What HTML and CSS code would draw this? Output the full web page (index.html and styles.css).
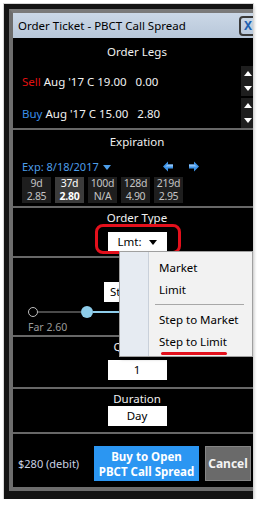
FILE: index.html
```html
<!DOCTYPE html>
<html lang="en">

<head>
    <meta charset="UTF-8">
    <meta name="viewport" content="width=device-width, initial-scale=1.0">
    <title>Order Ticket</title>
    <link rel="stylesheet" href="styles.css">
</head>

<body>

    <div class="shot">
        <div class="window">

            <div class="titlebar">
                <span class="title">Order Ticket - PBCT Call Spread</span>
                <span class="close">X</span>
            </div>

            <div class="content">

                <div class="section legs">
                    <h2>Order Legs</h2>
                    <div class="leg">
                        <span class="leg-text"><span class="sell">Sell</span> Aug '17 C 19.00 &nbsp; 0.00</span>
                        <span class="spinner"><i class="up"></i><i class="down"></i></span>
                    </div>
                    <div class="leg">
                        <span class="leg-text"><span class="buy">Buy</span> Aug '17 C 15.00 &nbsp; 2.80</span>
                        <span class="spinner"><i class="up"></i><i class="down"></i></span>
                    </div>
                </div>

                <div class="section expiration">
                    <h2>Expiration</h2>
                    <div class="exp-row">
                        <span class="exp-date">Exp: 8/18/2017 <i class="caret"></i></span>
                        <span class="nav-arrows">
                            <svg width="10" height="11" viewBox="0 0 10 11">
                                <path d="M0 5.5 L5 0.5 L5 3.5 L10 3.5 L10 7.5 L5 7.5 L5 10.5 Z" fill="#3d93e8" />
                                <path d="M5 3.5 L10 3.5 L10 5.5 L2 5.5 Z" fill="#8fc3f5" />
                            </svg>
                            <svg width="10" height="11" viewBox="0 0 10 11">
                                <path d="M10 5.5 L5 0.5 L5 3.5 L0 3.5 L0 7.5 L5 7.5 L5 10.5 Z" fill="#3d93e8" />
                                <path d="M5 3.5 L0 3.5 L0 5.5 L8 5.5 Z" fill="#8fc3f5" />
                            </svg>
                        </span>
                    </div>
                    <div class="chips">
                        <div class="chip"><span>9d</span><span>2.85</span></div>
                        <div class="chip selected"><span>37d</span><span>2.80</span></div>
                        <div class="chip"><span>100d</span><span>N/A</span></div>
                        <div class="chip"><span>128d</span><span>4.90</span></div>
                        <div class="chip"><span>219d</span><span>2.95</span></div>
                    </div>
                </div>

                <div class="section order-type">
                    <h2>Order Type</h2>
                    <div class="box">Lmt: <i class="caret dark"></i></div>
                </div>

                <div class="section price">
                    <h2>&nbsp;</h2>
                    <div class="box wide">Standard</div>
                    <div class="slider">
                        <span class="knob empty"></span>
                        <span class="track"></span>
                        <span class="knob filled"></span>
                        <span class="track active"></span>
                    </div>
                    <div class="slider-label">Far 2.60</div>
                </div>

                <div class="section quantity">
                    <h2>Quantity</h2>
                    <div class="box">1</div>
                </div>

                <div class="section duration">
                    <h2>Duration</h2>
                    <div class="box">Day</div>
                </div>

                <div class="footer">
                    <span class="cost">$280 (debit)</span>
                    <button class="btn-buy">Buy to Open<br>PBCT Call Spread</button>
                    <button class="btn-cancel">Cancel</button>
                </div>

            </div>

            <!-- annotation + open dropdown, over the ticket -->
            <div class="highlight"></div>

            <div class="menu">
                <div class="menu-item">Market</div>
                <div class="menu-item">Limit</div>
                <div class="menu-sep"></div>
                <div class="menu-item">Step to Market</div>
                <div class="menu-item">Step to Limit</div>
                <div class="underline"></div>
            </div>

        </div>
    </div>

</body>

</html>
```

FILE: styles.css
```css
html,
body {
    margin: 0;
    padding: 0;
    background: #fff;
    font-family: "Noto Sans", "Open Sans", sans-serif;
}

.shot {
    box-sizing: border-box;
    width: 249px;
    height: 495px;
    margin: 4px 0 0 4px;
    padding: 5px 0 0 5px;
    background: #141414;
    overflow: hidden;
    box-shadow: 0 0 0 1px #d8d8d8, 1px 2px 3px rgba(0, 0, 0, 0.25);
}

.window {
    position: relative;
    width: 248px;
    border: 4px solid #6d6d6d;
    border-right: none;
    border-top-color: #7a7a7a;
}

.titlebar {
    display: flex;
    align-items: center;
    justify-content: space-between;
    height: 25px;
    padding: 0 4px 0 5px;
    background: linear-gradient(#cbd8e7, #b8c7d9);
}

.title {
    font-size: 11.5px;
    color: #000;
}

.close {
    box-sizing: border-box;
    width: 18px;
    height: 20px;
    border: 2px solid #3a3a3a;
    border-radius: 4px;
    font-size: 12px;
    line-height: 16px;
    text-align: center;
    color: #1d5fb0;
    font-weight: bold;
}

.content {
    background: #000;
    color: #fff;
}

.section {
    border-bottom: 2px solid #676767;
}

.section h2 {
    margin: 0;
    font-size: 11.5px;
    font-weight: normal;
    line-height: 16px;
    text-align: center;
    color: #f0f0f0;
}

/* order legs */
.legs {
    padding-top: 6px;
}

.leg {
    display: flex;
    align-items: center;
    justify-content: space-between;
    height: 30px;
    margin-top: 2px;
    padding-left: 9px;
}

.legs h2 + .leg {
    margin-top: 6px;
}

.leg-text {
    font-size: 11.5px;
    color: #f2f2f2;
}

.sell {
    color: #e01010;
}

.buy {
    color: #3a8fe8;
}

.spinner {
    display: flex;
    flex-direction: column;
    justify-content: space-around;
    align-items: center;
    width: 13px;
    height: 30px;
    margin-right: 7px;
    background: #1e1e1e;
}

.spinner i {
    width: 0;
    height: 0;
    border-left: 4px solid transparent;
    border-right: 4px solid transparent;
}

.spinner .up {
    border-bottom: 5px solid #fff;
}

.spinner .down {
    border-top: 5px solid #fff;
}

/* expiration */
.expiration {
    padding: 4px 0 3px;
}

.exp-row {
    display: flex;
    align-items: center;
    height: 16px;
    margin-top: 8px;
    padding-left: 9px;
}

.exp-date {
    width: 141px;
    font-size: 11px;
    color: #4d9eea;
}

.caret {
    display: inline-block;
    width: 0;
    height: 0;
    margin-left: 1px;
    vertical-align: middle;
    border-left: 4px solid transparent;
    border-right: 4px solid transparent;
    border-top: 5px solid #4d9eea;
}

.caret.dark {
    margin-left: 4px;
    border-top-color: #000;
}

.nav-arrows {
    display: flex;
    gap: 16px;
}

.chips {
    display: flex;
    gap: 4px;
    margin-top: 3px;
    padding-left: 9px;
}

.chip {
    display: flex;
    flex-direction: column;
    align-items: center;
    width: 29px;
    height: 26px;
    background: #1e1e1e;
    font-size: 10.5px;
    letter-spacing: -0.3px;
    line-height: 13px;
    color: #c4c4c4;
}

.chip.selected {
    background: #3b3b3b;
    font-weight: bold;
    color: #fff;
}

.chip.selected span:first-child {
    font-weight: normal;
}

/* white value boxes */
.box {
    width: 59px;
    height: 20px;
    margin: 6px auto 0;
    background: #fff;
    color: #000;
    font-size: 11.5px;
    line-height: 20px;
    text-align: center;
}

.box.wide {
    box-sizing: border-box;
    width: 66px;
    padding-left: 6px;
    text-align: left;
}

.order-type {
    padding: 2px 0 4px;
}

.price {
    padding: 2px 0 2px;
}

.slider {
    display: flex;
    align-items: center;
    height: 10px;
    margin-top: 5px;
    padding-left: 15px;
}

.knob {
    box-sizing: border-box;
    flex: none;
    width: 10px;
    height: 10px;
    border-radius: 50%;
}

.knob.empty {
    border: 1.5px solid #bdbdbd;
}

.knob.filled {
    width: 12px;
    height: 12px;
    background: #8ecdea;
}

.track {
    width: 43px;
    height: 2px;
    background: #4a4a4a;
}

.track.active {
    flex: 1;
    background: #8ecdea;
}

.slider-label {
    margin-top: 4px;
    padding-left: 15px;
    font-size: 10.5px;
    line-height: 12px;
    color: #9a9a9a;
}

.quantity {
    padding: 2px 0 7px;
}

.quantity .box {
    margin-top: 5px;
}

.duration {
    padding: 3px 0 6px;
}

.duration h2 {
    line-height: 14px;
}

.duration .box {
    margin-top: 0;
}

/* footer */
.footer {
    display: flex;
    align-items: center;
    height: 35px;
    padding: 12px 0 6px 5px;
}

.cost {
    width: 76px;
    font-size: 11px;
    color: #c9d1e3;
}

button {
    height: 35px;
    padding: 0;
    border: none;
    font-family: "Noto Sans", "Open Sans", sans-serif;
    font-weight: bold;
    color: #fff;
}

.btn-buy {
    width: 105px;
    background: #2b96f2;
    font-size: 11.5px;
    line-height: 15px;
}

.btn-cancel {
    box-sizing: border-box;
    width: 46px;
    margin-left: 6px;
    background: #6a6a6a;
    border: 1px solid #858585;
    font-size: 12px;
    color: #f4f4f4;
}

/* overlays */
.highlight {
    position: absolute;
    left: 82px;
    top: 211px;
    width: 86px;
    height: 30px;
    box-sizing: border-box;
    border: 3px solid #e3101c;
    border-radius: 8px;
}

.menu {
    position: absolute;
    left: 106px;
    top: 238px;
    box-sizing: border-box;
    width: 134px;
    height: 106px;
    padding: 5px 0 0 0;
    background: linear-gradient(to right, #e6ebf2 0, #e6ebf2 28px, #c9d0da 28px, #c9d0da 29px, #f2f2f2 29px);
    border: 1px solid #a0a0a0;
    box-shadow: 2px 2px 3px rgba(0, 0, 0, 0.35);
}

.menu-item {
    height: 22px;
    padding-left: 39px;
    font-size: 11.5px;
    line-height: 22px;
    color: #000;
}

.menu-sep {
    height: 1px;
    margin: 3px 8px 4px 35px;
    background: #a8a8a8;
}

.underline {
    position: absolute;
    left: 41px;
    top: 100px;
    width: 66px;
    height: 3px;
    border-radius: 2px;
    background: #e3101c;
}
```
